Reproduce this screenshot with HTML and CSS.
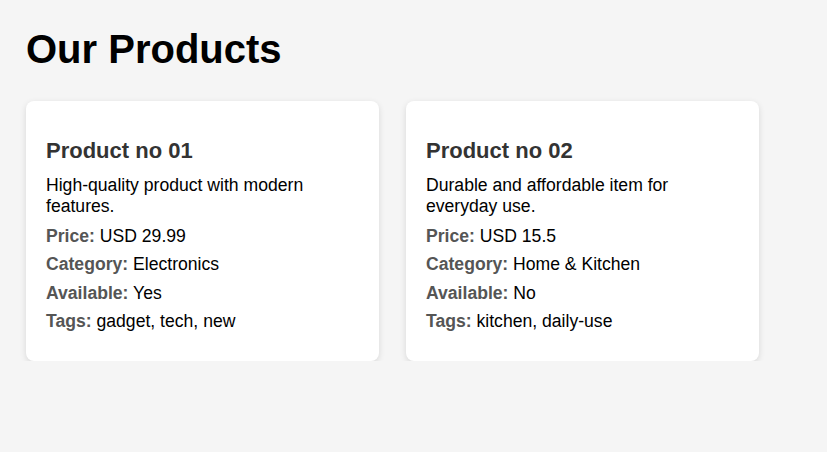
FILE: index.html
```html
<!DOCTYPE html>
<html lang="en">
<head>
<meta charset="utf-8">
<title>Our Products</title>
<link rel="stylesheet" href="styles.css">
</head>
<body>
<main class="page">
  <h1 class="page-title">Our Products</h1>
  <div class="product-list">
    <article class="card">
      <h3 class="card-title">Product no 01</h3>
      <p class="card-desc">High-quality product with modern features.</p>
      <p class="card-row"><span class="label">Price:</span> USD 29.99</p>
      <p class="card-row"><span class="label">Category:</span> Electronics</p>
      <p class="card-row"><span class="label">Available:</span> Yes</p>
      <p class="card-row"><span class="label">Tags:</span> gadget, tech, new</p>
    </article>
    <article class="card">
      <h3 class="card-title">Product no 02</h3>
      <p class="card-desc">Durable and affordable item for everyday use.</p>
      <p class="card-row"><span class="label">Price:</span> USD 15.5</p>
      <p class="card-row"><span class="label">Category:</span> Home &amp; Kitchen</p>
      <p class="card-row"><span class="label">Available:</span> No</p>
      <p class="card-row"><span class="label">Tags:</span> kitchen, daily-use</p>
    </article>
  </div>
</main>
</body>
</html>
```
FILE: styles.css
```css
html, body {
  margin: 0;
  background: #f5f5f5;
}
body {
  font-family: "Liberation Sans", Arial, sans-serif;
  font-size: 17.6px;
  line-height: 20px;
  color: #000;
}
.page {
  padding: 0 26px;
}
.page-title {
  font-size: 40px;
  font-weight: bold;
  margin: 27px 0 29px;
  line-height: normal;
}
.product-list {
  display: flex;
  gap: 27px;
  align-items: flex-start;
}
.card {
  box-sizing: border-box;
  width: 353px;
  background: #fff;
  border-radius: 8px;
  padding: 20px;
  box-shadow: 0 2px 6px rgba(0, 0, 0, 0.12);
}
.card-title {
  font-size: 22px;
  font-weight: bold;
  color: #333;
  margin: 17px 0 11px;
  line-height: normal;
}
.card-desc {
  margin: 0 0 9px;
  line-height: 21px;
}
.card-row {
  margin: 8px 0;
  line-height: 20.3px;
}
.card-row:last-child {
  margin-bottom: 10px;
}
.label {
  font-weight: bold;
  color: #555;
}
```
